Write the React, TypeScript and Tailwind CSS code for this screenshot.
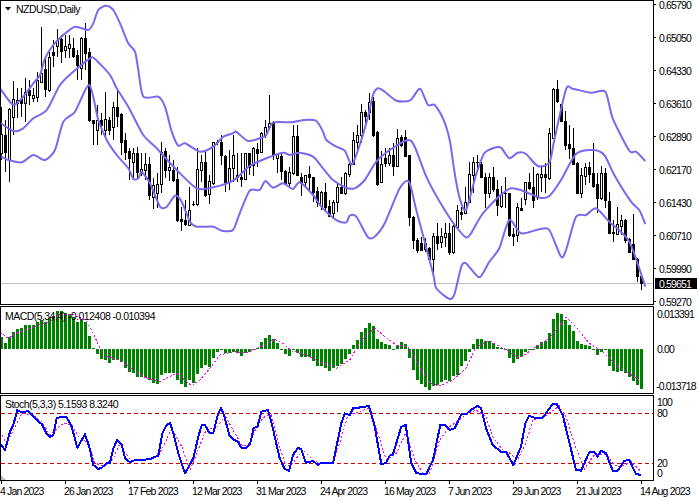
// NZDUSD daily chart, three stacked panes (price + bollinger, macd, stochastic)
const barX = (i: number) => 1.5 + 4 * i;

// "x,y x,y ..." in crop units (3x), shifted to page pixels
const pts = (ox: number, oy: number, s: string) =>
  s.trim().split(/\s+/).map((p) => {
    const [x, y] = p.split(',').map(Number);
    return `${(ox + x / 3).toFixed(1)},${(oy + y / 3).toFixed(1)}`;
  }).join(' ');

// rounds the corners off a point list, the bands are smooth curves
const smooth = (s: string) => {
  const p = s.split(' ').map((q) => q.split(',').map(Number));
  let d = `M${p[0][0]},${p[0][1]}`;
  for (let i = 0; i < p.length - 1; i++) {
    const a = p[Math.max(i - 1, 0)], b = p[i], c = p[i + 1], e = p[Math.min(i + 2, p.length - 1)];
    const c1 = [b[0] + (c[0] - a[0]) / 8, b[1] + (c[1] - a[1]) / 8];
    const c2 = [c[0] - (e[0] - b[0]) / 8, c[1] - (e[1] - b[1]) / 8];
    d += ` C${c1[0].toFixed(1)},${c1[1].toFixed(1)} ${c2[0].toFixed(1)},${c2[1].toFixed(1)} ${c[0]},${c[1]}`;
  }
  return d;
};

// bands
const UPPER = [
  pts(0, 0, '0,265 40,315 70,290 100,250 120,225 135,175 160,135 190,105 225,80 265,90 280,70 295,30 318,17 340,30 360,70 385,130 405,155 415,210 430,290 475,290 495,320 515,395 535,437 555,430 600,455 640,440 670,410 699,400'),
  pts(233, 60, '10,215 45,243 85,233 100,225 120,188 175,187 215,180 250,183 270,215 280,240 310,260 335,272 350,305 360,310 385,240 405,170 420,105 435,85 455,95 490,122 530,122 555,90 565,90 585,135 605,135 630,175 650,240 665,340 680,415 699,450'),
  pts(466, 60, '30,345 55,280 85,263 105,263 130,295 155,278 180,282 215,318 250,308 265,240 300,88 320,86 375,98 418,95 440,175 490,272 510,275 538,303'),
].join(' ');
const MIDDLE = [
  pts(0, 0, '0,368 40,393 70,385 100,355 140,330 180,255 220,215 270,175 285,177 330,225 350,265 385,320 430,405 470,445'),
  pts(0, 130, '530,120 590,175 640,172 699,152'),
  pts(233, 60, '50,318 100,295 150,278 170,285 200,278 240,290 270,325 300,360 340,383 365,385 395,360 430,305 470,270 525,240 545,260 580,350 620,425 665,495 699,532'),
  pts(466, 60, '15,520 55,455 135,385 220,413 250,408 285,360 330,282 380,270 415,285 445,345 495,425 520,450 538,492'),
].join(' ');
const LOWER = [
  pts(0, 0, '0,467 25,480 65,487 100,465 135,480 165,450 190,365 225,335 268,255 295,360 320,420 350,465 385,505'),
  pts(0, 130, '400,147 415,145 425,127 450,160 480,230 500,230 525,197 545,215 570,275 590,290 640,290 665,302 699,300'),
  pts(233, 60, '20,460 50,392 80,390 97,363 120,383 150,370 180,387 200,367 240,405 265,440 290,465 315,483 340,487 350,467 370,470 405,532 425,530 455,490 500,385 528,365 550,450 600,640 610,685 650,717 665,700 685,620 699,610'),
  pts(466, 60, '40,652 70,605 100,565 130,480 165,520 220,508 250,510 285,590 300,570 330,470 360,465 390,445 430,485 490,545 538,680'),
].join(' ');

// candles: top bottom high low white
const CANDLES_A = `134 153 107 160 1|135 152 120 172 0|109 160 108 182 1|99 117 81 135 1|100 103 88 118 1|99 103 88 117 0|92 103 78 122 1|90 95 80 105 0|95 98 88 102 1|80 97 72 102 1|73 82 27 83 1|69 89 58 97 0|57 90 52 92 1|52 55 40 67 0|40 46 29 57 1|39 51 35 63 0|46 50 35 58 1|44 48 35 58 1|48 56 38 58 0|55 65 50 80 0|38 68 37 80 1|38 53 23 70 0|52 120 48 122 0|120 123 120 145 0|120 130 105 145 1|120 125 113 135 0|119 130 92 137 1|120 130 117 135 0|107 127 102 140 1|107 116 90 127 0|114 142 113 155 0|140 152 133 160 0|151 158 148 180 0|153 162 148 180 1|153 172 147 178 0|169 172 153 176 1|164 170 153 180 1|164 195 157 200 0|185 197 178 209 1|184 193 173 208 1|152 184 142 193 1|151 170 148 178 0|167 170 155 181 1|170 180 160 182 0|179 220 167 222 0|219 221 207 231 0|220 224 200 226 0|210 225 187 226 1|204 204 201 206 0|169 204 148 206 1|162 170 155 182 1|162 195 152 197 0|181 194 175 204 1|142 183 142 185 1|142 142 140 145 0|142 155 135 165 0|156 182 155 192 0|168 182 150 190 1`;
// crop units, page y = 60 + v / 3
const CANDLES_B = `285 325 225 365 1|345 350 280 365 0|350 358 280 380 0|280 358 280 360 1|280 320 280 345 0|265 315 262 347 1|268 278 250 320 0|218 277 215 280 1|200 225 180 235 1|190 200 105 210 1|188 285 183 300 0|282 293 282 338 1|288 332 275 360 0|332 370 330 375 0|335 370 320 378 1|227 338 195 345 1|227 345 195 345 0|352 368 340 407 0|345 365 345 380 1|343 352 317 395 0|352 395 350 425 0|393 425 380 440 0|397 437 393 450 1|397 440 370 455 0|438 468 420 472 0|425 458 420 470 1|380 425 370 455 1|380 398 350 400 0|340 398 335 405 1|313 342 310 350 1|240 312 215 315 1|226 245 195 270 1|155 226 133 250 1|155 168 150 200 0|125 155 100 180 1|122 225 110 230 0|215 373 213 378 0|312 365 272 370 1|293 310 265 320 0|285 310 265 318 1|285 317 250 347 0|233 317 208 320 1|230 255 225 260 0|232 288 210 290 0|285 472 285 497 0|470 540 467 568 0|540 570 535 580 0|548 570 530 570 0|550 568 535 575 1|563 597 560 607 0|527 597 520 640 1|527 550 490 570 0|528 545 505 565 1|520 530 488 560 1|520 575 490 585 0|498 575 495 582 1|450 500 435 505 1|455 462 440 480 0|425 458 380 460 1|343 425 305 430 1|305 345 290 400 1|305 307 285 330 0|312 352 305 355 0|352 398 340 445 0|350 398 340 415 1|350 388 320 395 0|388 435 360 467 0|402 437 378 445 1|398 402 350 445 0|400 525 398 530 0|522 527 505 557 0|442 525 430 545 1|445 450 415 452 0|367 418 367 435 1|367 385 338 390 0|382 420 320 445 0|343 410 340 420 1|343 350 322 395 1|343 350 310 400 0|220 355 205 360 1|88 235 85 237 1|88 123 60 130 0|132 182 132 185 0|182 255 152 270 0|252 265 195 298 0|265 312 205 315 0|310 398 305 400 0|345 398 325 413 1|320 347 310 375 1|322 342 305 370 0|340 378 250 385 0|372 415 340 460 0|340 415 317 420 1|340 420 325 445 0|423 518 395 520 0|515 520 480 545 1|492 522 440 525 1|480 498 465 525 1|480 540 478 548 0|537 575 535 578 0|552 598 462 600 0|597 648 595 665 0|647 670 645 690 0`;

const row = (s: string) => s.split('|').map((r) => r.split(' ').map(Number));
const CANDLES = [
  ...row(CANDLES_A),
  ...row(CANDLES_B).map(([t, b, h, l, w]) => [60 + t / 3, 60 + b / 3, 60 + h / 3, 60 + l / 3, w]),
];

// macd histogram ends in crop units, zero line sits on 147
const HIST = `110 128 112 97 88 85 76 76 76 67 60 67 55 47 33 33 40 42 50 65 60 65 108 145 162 177 180 190 180 180 185 203 215 218 231 232 233 240 250 252 226 220 218 218 240 252 262 240 250 222 205 195 200 175 155 148 160 160 155 158 168 158 155 148 145 127 113 105 117 128 147 162 168 150 158 170 172 170 183 197 197 205 212 205 197 192 178 162 135 120 95 83 68 78 117 125 133 135 146 135 126 132 174 210 240 252 260 270 258 255 245 240 242 228 225 198 183 155 132 117 117 124 122 130 142 145 148 175 188 178 170 155 148 149 135 127 123 98 57 40 42 60 75 93 122 133 136 138 148 165 155 150 197 212 215 212 218 232 242 255 267`
  .split(' ').map(Number);

const SIGNAL = [
  pts(0, 300, '0,97 25,115 50,100 100,80 150,65 180,42 215,42 255,60 275,90 300,145 320,170 360,180 400,210 440,235 480,245 530,220 575,257 600,240 630,205 660,165 699,155'),
  pts(233, 300, '40,158 85,140 125,118 150,130 175,152 220,165 260,185 310,205 350,180 385,120 425,85 450,105 490,135 525,140 565,210 590,250 620,258 660,240 699,205'),
  pts(466, 300, '30,140 70,122 130,155 160,175 210,140 250,115 300,52 330,80 370,130 410,155 450,195 520,240'),
].join(' ');

const STOCH_MAIN = [
  pts(0, 300, '0,430 15,450 30,395 40,375 52,330 65,337 85,333 110,360 125,372 140,402 150,410 160,405 170,355 185,350 200,352 215,380 232,443 255,403 268,440 280,495 295,507 305,503 320,490 330,488 340,445 352,420 365,435 375,475 390,487 405,480 450,478 465,470 475,468 487,400 498,378 510,368 520,400 535,460 555,520 580,475 595,410 605,375 615,375 628,398 640,398 655,340 663,325 672,345 688,405 699,418'),
  pts(233, 300, '15,425 25,443 40,443 52,430 62,383 73,382 85,335 105,330 115,365 140,475 155,507 168,512 180,465 195,443 205,448 218,488 240,483 255,495 265,488 300,490 325,370 335,340 350,345 360,325 385,322 408,318 425,380 445,492 458,490 470,467 480,463 505,380 518,375 535,490 550,520 580,522 600,480 622,375 635,375 650,390 665,385 685,343 699,343'),
  pts(466, 300, '15,330 35,317 45,325 60,385 80,435 105,455 120,455 142,495 165,440 178,370 190,347 205,353 230,353 260,312 272,312 290,345 330,510 345,512 370,457 385,455 395,470 405,452 420,460 440,512 455,512 475,482 490,480 510,522 525,525'),
].join(' ');
const STOCH_SIGNAL = [
  pts(0, 300, '0,395 20,430 45,380 65,340 100,345 125,365 150,405 190,370 215,375 235,410 265,430 285,490 310,497 340,475 360,430 390,480 420,483 460,475 485,450 515,385 545,440 570,510 590,460 620,385 650,385 675,345 699,390'),
  pts(233, 300, '30,440 50,430 75,370 95,350 115,345 135,425 160,500 175,495 210,450 240,480 260,490 300,490 320,430 345,345 410,325 430,385 460,480 490,460 520,395 545,480 570,520 590,520 620,420 650,380 699,345'),
  pts(466, 300, '30,330 60,350 80,410 110,450 130,458 155,480 180,430 200,360 235,350 280,318 300,350 325,430 355,507 385,465 420,462 445,495 465,500 495,485 525,515'),
].join(' ');

const PRICES = ['0.65790', '0.65050', '0.64330', '0.63610', '0.62890', '0.62170', '0.61430', '0.60710', '0.59990', '0.59270'];
const DATES = ['4 Jan 2023', '26 Jan 2023', '17 Feb 2023', '12 Mar 2023', '31 Mar 2023', '24 Apr 2023', '16 May 2023', '7 Jun 2023', '29 Jun 2023', '21 Jul 2023', '14 Aug 2023'];

function Band({ points }: { points: string }) {
  return <path d={smooth(points)} fill="none" stroke="#7b68ee" strokeWidth={2} />;
}

export default function App() {
  return (
    <div className="w-[699px] h-[500px] flex flex-col gap-px bg-white text-black overflow-hidden font-['Liberation_Sans',sans-serif] text-[10.5px] leading-[8px] tracking-[-0.85px]">

      {/* price pane */}
      <div className="flex h-[305px] shrink-0">
        <div className="relative w-[654px] shrink-0 border border-black">
          <svg width={652} height={303} viewBox="1 1 652 303" className="block">
            <line x1={1} x2={653} y1={283.5} y2={283.5} stroke="#c0c0c0" />
            {CANDLES.map(([t, b, h, l, w], i) => {
              const x = barX(i);
              return (
                <g key={i} shapeRendering="crispEdges">
                  <line x1={x} x2={x} y1={Math.round(h)} y2={Math.round(l)} stroke="#000" />
                  {b - t < 1.5 ? (
                    <line x1={x - 1.5} x2={x + 1.5} y1={Math.round(t) + 0.5} y2={Math.round(t) + 0.5} stroke="#000" />
                  ) : (
                    <rect x={x - 1} y={Math.round(t) + 0.5} width={2} height={Math.round(b) - Math.round(t)} fill={w ? '#fff' : '#000'} stroke="#000" />
                  )}
                </g>
              );
            })}
            <Band points={UPPER} />
            <Band points={MIDDLE} />
            <Band points={LOWER} />
            <polygon points="5,7 11,7 8,10.5" fill="#000" />
          </svg>
          <span className="absolute left-[15px] top-[4px] tracking-[-0.5px]">NZDUSD,Daily</span>
        </div>
        <div className="relative flex-1">
          <div className="flex flex-col -mt-[12px]">
            {PRICES.map((p) => (
              <div key={p} className="h-[33px] flex items-center">
                <span className="w-[2px] h-px bg-black" />
                <span className="ml-[3px]">{p}</span>
              </div>
            ))}
          </div>
          <span className="absolute left-px top-[278px] h-[11px] w-[42px] pl-[4px] flex items-center bg-black text-white">0.59651</span>
        </div>
      </div>

      {/* macd pane */}
      <div className="flex h-[88px] shrink-0">
        <div className="relative w-[654px] shrink-0 border border-black">
          <svg width={652} height={86} viewBox="1 307 652 86" className="block">
            {HIST.map((v, i) => {
              const y = 300 + v / 3;
              return (
                <rect key={i} x={barX(i) - 1.5} y={Math.round(Math.min(y, 349))} width={3} height={Math.max(Math.round(Math.abs(y - 349)), 1)} fill="#008000" shapeRendering="crispEdges" />
              );
            })}
            <polyline points={SIGNAL} fill="none" stroke="#ff00ff" strokeDasharray="2 2" shapeRendering="crispEdges" />
          </svg>
          <span className="absolute left-[4px] top-[5px] tracking-[-0.55px]">MACD(5,34,4) -0.012408 -0.010394</span>
        </div>
        <div className="flex-1 flex flex-col pl-[3px]">
          <span className="mt-[3px] h-[10px] flex items-center">0.013391</span>
          <span className="mt-[25px] h-[10px] flex items-center">0.00</span>
          <span className="mt-[27px] h-[10px] flex items-center -ml-[1px]">-0.013718</span>
        </div>
      </div>

      {/* stochastic pane */}
      <div className="flex h-[86px] shrink-0">
        <div className="relative w-[654px] shrink-0 border border-black">
          <svg width={652} height={84} viewBox="1 396 652 84" className="block">
            <line x1={1} x2={653} y1={413.5} y2={413.5} stroke="#d40000" strokeDasharray="4 3" />
            <line x1={1} x2={653} y1={463.5} y2={463.5} stroke="#d40000" strokeDasharray="4 3" />
            <polygon points="1,475 6,480 1,480" fill="#bbb" />
            <polyline points={STOCH_SIGNAL} fill="none" stroke="#ff00ff" strokeDasharray="2 2" shapeRendering="crispEdges" />
            <polyline points={STOCH_MAIN} fill="none" stroke="#0000ff" strokeWidth={2} strokeLinejoin="round" shapeRendering="crispEdges" />
          </svg>
          <span className="absolute left-[4px] top-[4px] tracking-[-0.55px]">Stoch(5,3,3) 5.1593 8.3240</span>
        </div>
        <div className="flex-1 flex flex-col pl-[3px]">
          <span className="mt-[2px] h-[10px] flex items-center">100</span>
          <span className="mt-[1px] h-[10px] flex items-center">80</span>
          <span className="mt-[40px] h-[10px] flex items-center">20</span>
          <span className="h-[10px] flex items-center">0</span>
        </div>
      </div>

      {/* date axis */}
      <div className="flex pl-px -mt-px">
        {DATES.map((d) => (
          <div key={d} className="w-[64px] shrink-0 flex flex-col whitespace-nowrap">
            <span className="w-px h-[3px] bg-black" />
            <span className="mt-[3px] -ml-[1px]">{d}</span>
          </div>
        ))}
      </div>
    </div>
  );
}
